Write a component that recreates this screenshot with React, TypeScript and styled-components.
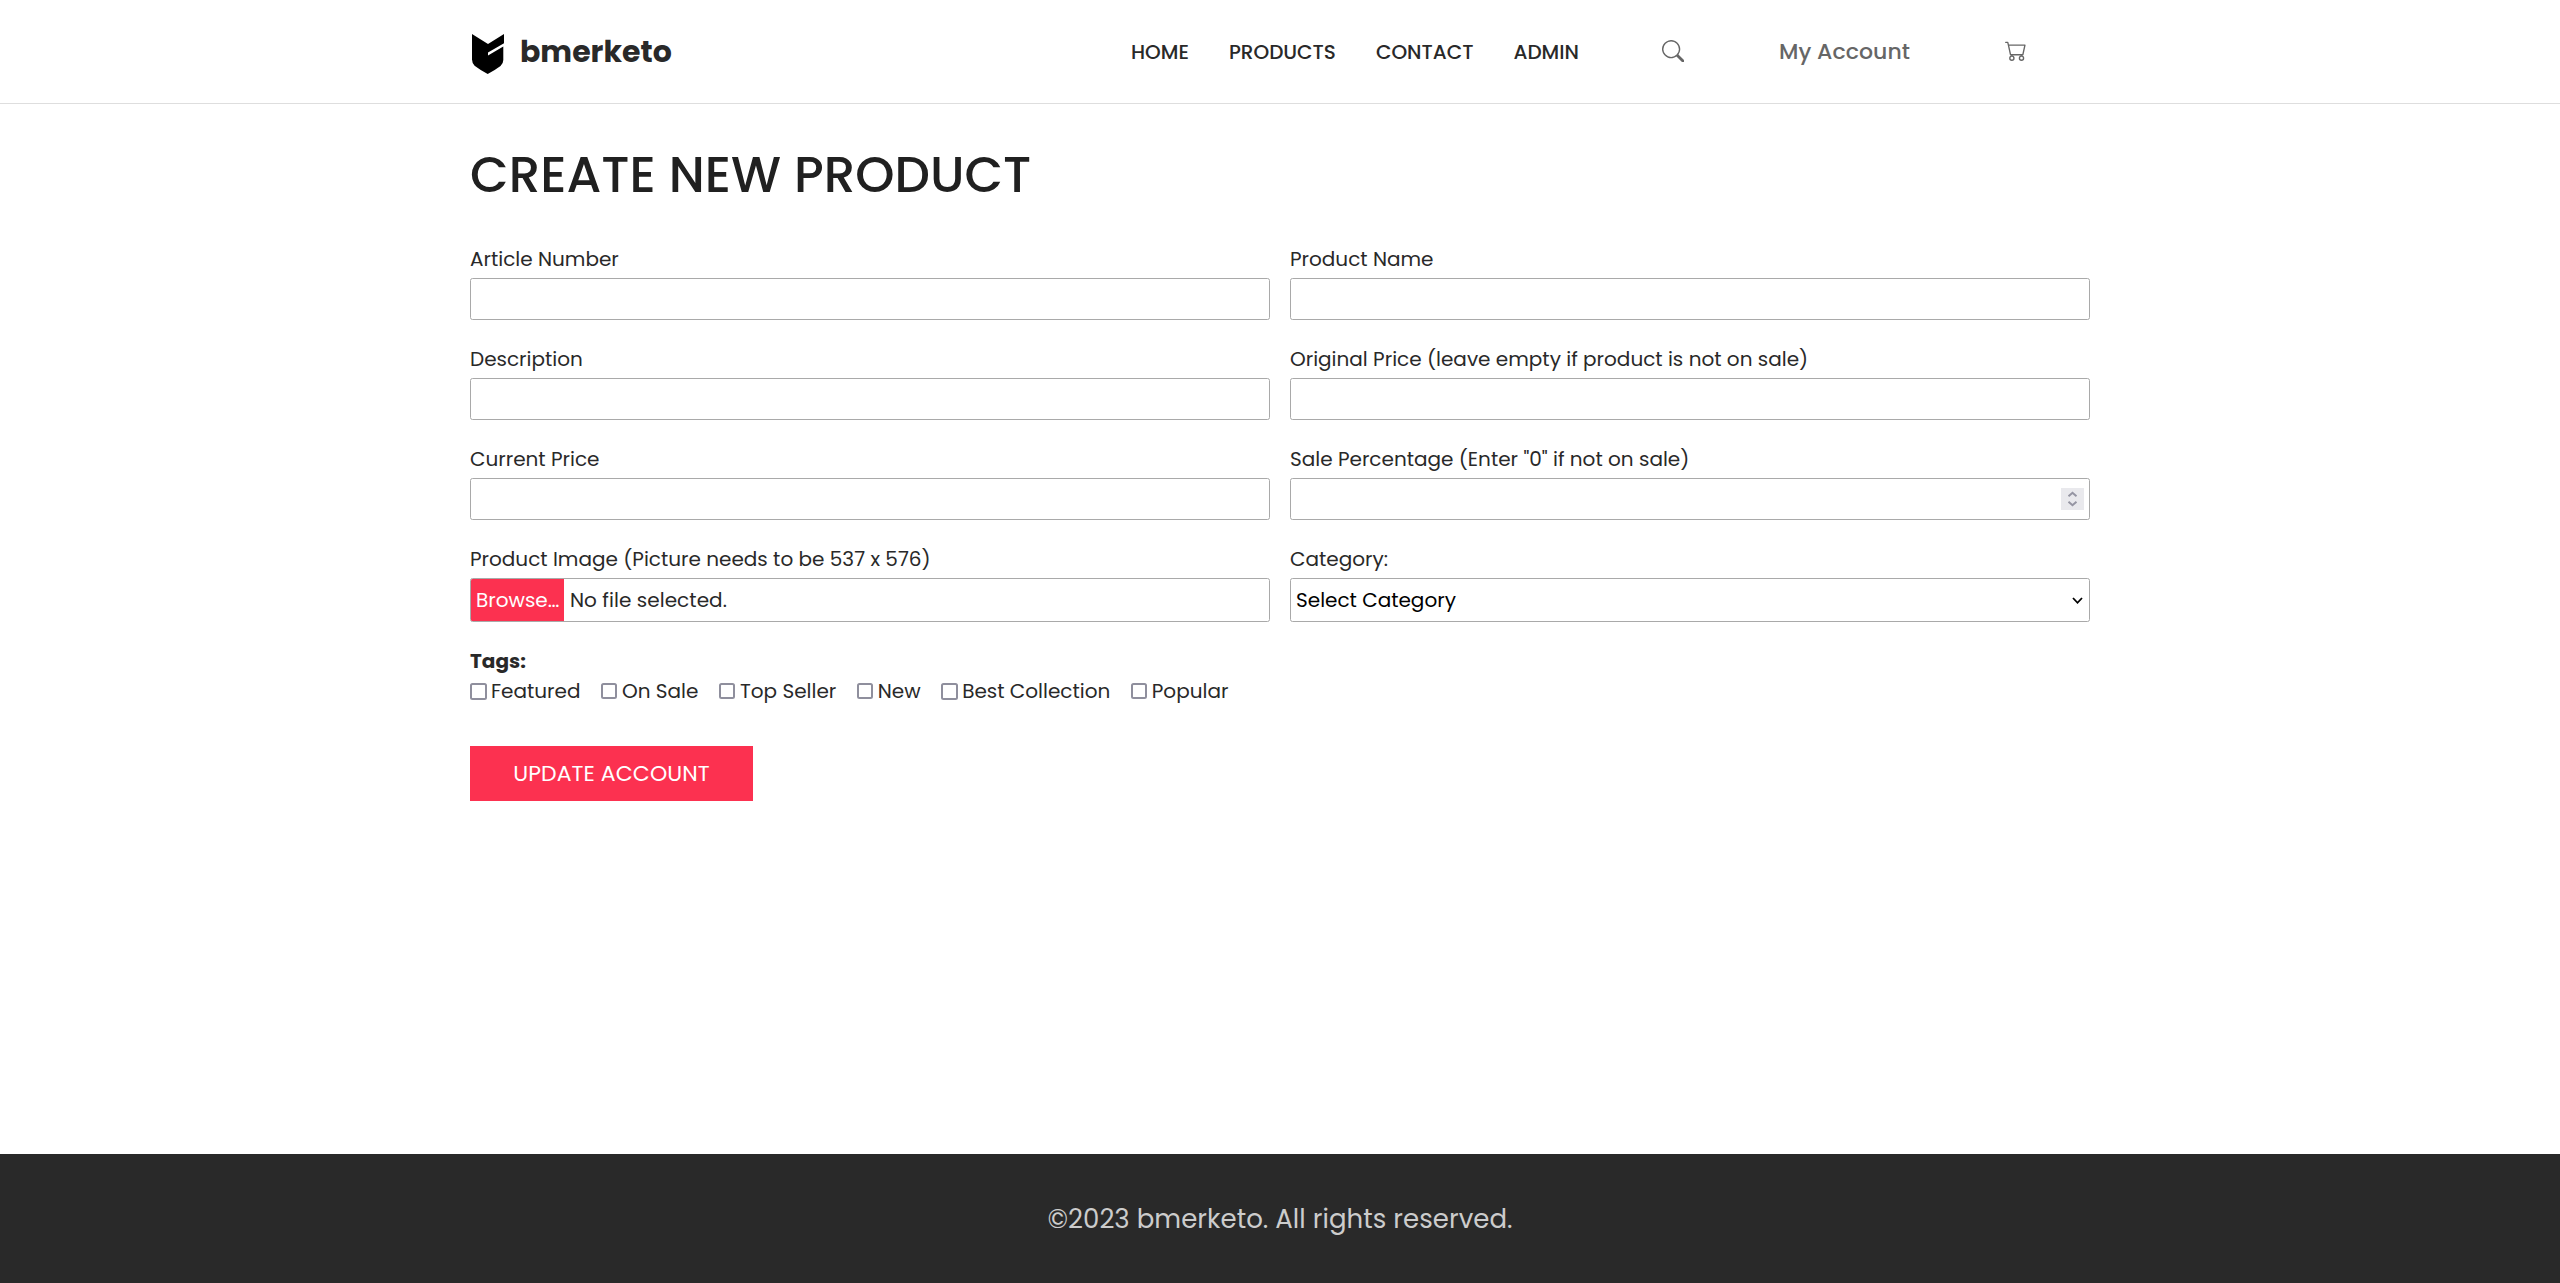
import React from "react";
import styled, { createGlobalStyle } from "styled-components";

const GlobalStyle = createGlobalStyle`
  *, *::before, *::after { box-sizing: border-box; }
  body { margin: 0; background: #fff; color: #292929; font-family: Poppins, Inter, sans-serif; font-size: 20px; }
  input, select, button { font: inherit; }
`;
const Page = styled.div`display: flex; flex-direction: column; min-height: 100vh;`;
const Container = styled.div`width: 1620px; margin: 0 auto;`;
const Header = styled.header`height: 104px; border-bottom: 1px solid #dedede;`;
const HeaderRow = styled(Container)`
  display: grid; grid-template-columns: 661px 530.5px 117.5px 226.3px 1fr; align-items: center; height: 103px;
`;
const Brand = styled.a`
  display: flex; align-items: center; gap: 16px; padding-left: 2px;
  font-size: 30px; font-weight: 700; line-height: 40px; color: #292929;
`;
const LogoMark = styled.svg`margin-top: 5px;`;
const Nav = styled.nav`display: flex; gap: 40px;`;
const NavLink = styled.a`font-weight: 500; line-height: 30px; text-transform: uppercase; padding-top: 1px;`;
const Account = styled.a`font-size: 22px; font-weight: 500; line-height: 30px; letter-spacing: 0.05px; color: #666;`;
const IconLink = styled.a`display: flex; margin-top: -1px; color: #666;`;
const Main = styled.main`flex: 1;`;
const Title = styled.h1`margin: 40px 0 42px; font-size: 50px; font-weight: 500; line-height: 61px; color: #202020;`;
const Fields = styled.div`display: grid; grid-template-columns: 1fr 1fr; gap: 27px 20px;`;
const Field = styled.div`display: flex; flex-direction: column; gap: 7px;`;
const Label = styled.label`line-height: 24px;`;
const Box = styled.div<{ $tall?: boolean }>`
  display: flex; align-items: center; height: ${p => (p.$tall ? 44 : 42)}px;
  border: 1px solid #a9a9a9; border-radius: 2.5px; overflow: hidden; background: #fff;
`;
const TextInput = styled.input`flex: 1; height: 100%; border: 0; outline: 0; padding: 0 5px; background: none;`;
const Spinner = styled.span`
  display: flex; align-items: center; justify-content: center; width: 23px; height: 22px; margin-right: 5px;
  background: #e9e9ed; color: #9595a3;
`;
const Browse = styled.span`
  display: flex; align-items: center; height: 100%; width: 93px; padding-left: 5px; margin-right: 6px;
  background: #fc3150; color: #fff;
`;
const FileName = styled.span`letter-spacing: 0.05px;`;
const Choice = styled.span`flex: 1; padding-left: 5px; color: #000;`;
const Chevron = styled.svg`margin-right: 5px;`;
const TagsTitle = styled.div`margin-top: 27px; font-weight: 700; line-height: 24px;`;
const Tags = styled.div`display: flex; gap: 20.5px; margin-top: 6px;`;
const Tag = styled.label`display: flex; align-items: center; line-height: 24px;`;
const Check = styled.input<{ $large?: boolean }>`
  appearance: none; width: ${p => (p.$large ? 17 : 16)}px; height: ${p => (p.$large ? 17 : 16)}px;
  margin: 0 ${p => (p.$large ? 4 : 5)}px 0 0;
  border: 2px solid #8f8f9d; border-radius: 2.5px; background: #fff;
`;
const Submit = styled.button`
  display: block; width: 283px; height: 55px; margin-top: 43px; padding: 0; border: 0;
  background: #fc3150; color: #fff; font-size: 22px; line-height: 30px; letter-spacing: 0.08px;
`;
const Footer = styled.footer`
  display: flex; align-items: center; justify-content: center; height: 129px;
  background: #292929; color: #ccc; font-size: 26px; line-height: 36px; letter-spacing: 0.04px;
`;

const Logo = () => (
  <LogoMark width="32" height="40" viewBox="0 0 32 40">
    <path fill="#000" d="M0 0 L16 10 L32 0 V9.2 L16 18.6 V21.6 L31.3 12.4 V26 Q31.3 29.5 28.5 32 Q22.5 36.5 15.7 40 Q8 36 2.6 31.8 Q0 29 0 25.6 Z" />
  </LogoMark>
);
const Search = () => (
  <svg width="22.5" height="22.5" viewBox="0 0 16 16" fill="currentColor">
    <path d="M11.742 10.344a6.5 6.5 0 1 0-1.397 1.398h-.001c.03.04.062.078.098.115l3.85 3.85a1 1 0 0 0 1.415-1.414l-3.85-3.85a1.007 1.007 0 0 0-.115-.1zM12 6.5a5.5 5.5 0 1 1-11 0 5.5 5.5 0 0 1 11 0z" />
  </svg>
);
const Cart = () => (
  <svg width="22" height="22.5" viewBox="0 0 16 16" fill="currentColor">
    <path d="M0 1.5A.5.5 0 0 1 .5 1H2a.5.5 0 0 1 .485.379L2.89 3H14.5a.5.5 0 0 1 .49.598l-1.5 7A.5.5 0 0 1 13 11H4a.5.5 0 0 1-.491-.408L2.01 3.607 1.61 2H.5a.5.5 0 0 1-.5-.5zM3.102 4l1.313 6h8.17l1.313-6H3.102zM5 11a2 2 0 1 0 0 4 2 2 0 0 0 0-4zm7 0a2 2 0 1 0 0 4 2 2 0 0 0 0-4zm-7 1a1 1 0 1 1 0 2 1 1 0 0 1 0-2zm7 0a1 1 0 1 1 0 2 1 1 0 0 1 0-2z" />
  </svg>
);

const links = ["Home", "Products", "Contact", "Admin"];
const tags = ["Featured", "On Sale", "Top Seller", "New", "Best Collection", "Popular"];

function TextField({ label }: { label: string }) {
  return <Field><Label>{label}</Label><Box><TextInput /></Box></Field>;
}

export default function App() {
  return (
    <Page>
      <GlobalStyle />
      <Header>
        <HeaderRow>
          <Brand><Logo />bmerketo</Brand>
          <Nav>{links.map(n => <NavLink key={n}>{n}</NavLink>)}</Nav>
          <IconLink><Search /></IconLink>
          <Account>My Account</Account>
          <IconLink><Cart /></IconLink>
        </HeaderRow>
      </Header>
      <Main>
        <Container>
          <Title>CREATE NEW PRODUCT</Title>
          <Fields>
            <TextField label="Article Number" />
            <TextField label="Product Name" />
            <TextField label="Description" />
            <TextField label="Original Price (leave empty if product is not on sale)" />
            <TextField label="Current Price" />
            <Field>
              <Label>Sale Percentage (Enter "0" if not on sale)</Label>
              <Box>
                <TextInput />
                <Spinner>
                  <svg width="11" height="16" viewBox="0 0 11 16" fill="none" stroke="currentColor" strokeWidth="2">
                    <path d="M1.5 5.3 L5.5 1.8 L9.5 5.3 M1.5 10.7 L5.5 14.2 L9.5 10.7" />
                  </svg>
                </Spinner>
              </Box>
            </Field>
            <Field>
              <Label>Product Image (Picture needs to be 537 x 576)</Label>
              <Box $tall><Browse>Browse…</Browse><FileName>No file selected.</FileName></Box>
            </Field>
            <Field>
              <Label>Category:</Label>
              <Box $tall>
                <Choice>Select Category</Choice>
                <Chevron width="13" height="9" viewBox="0 0 13 9" fill="none" stroke="#000" strokeWidth="1.8">
                  <path d="M2 2 L6.5 6.8 L11 2" />
                </Chevron>
              </Box>
            </Field>
          </Fields>
          <TagsTitle>Tags:</TagsTitle>
          <Tags>
            {tags.map(t => (
              <Tag key={t}><Check type="checkbox" $large={t === "Featured" || t === "Best Collection"} />{t}</Tag>
            ))}
          </Tags>
          <Submit>UPDATE ACCOUNT</Submit>
        </Container>
      </Main>
      <Footer>©2023 bmerketo. All rights reserved.</Footer>
    </Page>
  );
}
